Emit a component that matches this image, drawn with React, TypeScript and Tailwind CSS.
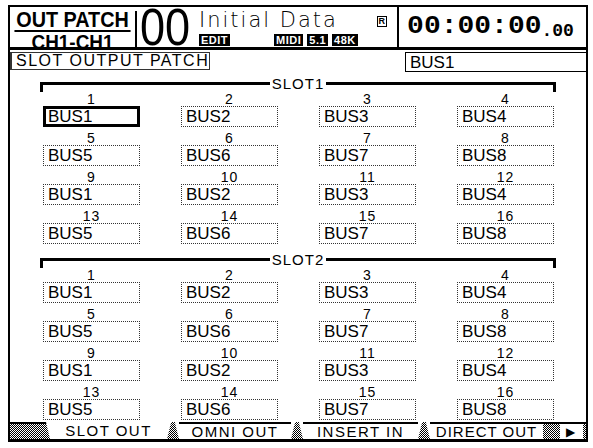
import React from "react";

const checker =
  "bg-[repeating-conic-gradient(#000_0_25%,#fff_0_50%)] bg-[length:2px_2px]";

type Cell = { n: number; label: string };

const buses = ["BUS1", "BUS2", "BUS3", "BUS4", "BUS5", "BUS6", "BUS7", "BUS8"];
const cells: Cell[] = Array.from({ length: 16 }, (_, i) => ({
  n: i + 1,
  label: buses[i % 8],
}));

function SlotHeader({ name }: { name: string }) {
  return (
    <div className="flex items-start h-[10px] w-[516px]">
      <div className="w-[3px] h-[10px] bg-black" />
      <div className="flex-1 h-[3px] bg-black" />
      <div className="-mt-[6px] px-[2px] text-[15px] leading-[15px] tracking-[1px]">{name}</div>
      <div className="flex-1 h-[3px] bg-black" />
      <div className="w-[3px] h-[10px] bg-black" />
    </div>
  );
}

function Slot({ name, selectedFirst }: { name: string; selectedFirst?: boolean }) {
  return (
    <div className="ml-[30px]">
      <SlotHeader name={name} />
      <div className="ml-[3px] grid grid-cols-[97px_97px_97px_97px] gap-x-[41px] gap-y-[4px]">
        {cells.map((c) => {
          const sel = selectedFirst && c.n === 1;
          return (
            <div key={c.n} className="flex flex-col">
              <div className="h-[14px] text-[14px] leading-[14px] text-center tracking-[1px]">{c.n}</div>
              <div
                className={
                  sel
                    ? "h-[21px] border-[3px] border-black pl-[2px] flex items-center text-[17px] leading-none"
                    : "h-[21px] border border-dotted border-[#333] pl-[4px] flex items-center text-[17px] leading-none"
                }
              >
                {c.label}
              </div>
            </div>
          );
        })}
      </div>
    </div>
  );
}

function Badge({ children }: { children: React.ReactNode }) {
  return (
    <span className="bg-black text-white text-[11px] font-bold leading-[12px] px-[2px] tracking-[0.5px] whitespace-nowrap">
      {children}
    </span>
  );
}

function TabDivider() {
  return (
    <div className="relative w-[12px] h-full">
      <div className={`absolute inset-0 ${checker} [clip-path:polygon(35%_0,65%_0,100%_100%,0_100%)]`} />
    </div>
  );
}

export default function App() {
  return (
    <div className="w-[593px] h-[448px] bg-white text-black font-['Liberation_Sans',Arial,sans-serif] overflow-hidden whitespace-nowrap">
      <div className="ml-[8px] pt-[5px] w-[580px]">
        <div className="border-2 border-black border-b-[3px] h-[437px] flex flex-col">
          {/* header */}
          <div className="h-[43px] flex border-b-[3px] border-black">
            <div className="w-[125px] flex flex-col items-center pt-[3px]">
              <div className="text-[22px] font-bold leading-[20px] border-b-2 border-black px-[2px] scale-x-[0.9]">
                OUT PATCH
              </div>
              <div className="text-[21px] font-bold leading-[18px] mt-[1px] scale-x-[0.9]">CH1-CH1</div>
            </div>
            <div className="w-[2px] mt-[4px] bg-black" />
            <div className="w-[62px] flex items-center pl-[3px]">
              <span className="text-[46px] leading-[36px] scale-y-[1.12] scale-x-[0.98] origin-left">00</span>
            </div>
            <div className="w-[198px] flex flex-col pt-[1px]">
              <div className="flex items-start justify-between pr-[10px]">
                <span className="text-[21px] leading-[24px] tracking-[2px] font-['DejaVu_Sans',sans-serif] font-extralight">
                  Initial Data
                </span>
                <span className="mt-[8px] border border-black text-[9px] leading-[9px] px-[1px] font-bold">R</span>
              </div>
              <div className="flex items-center gap-[4px] mt-[2px]">
                <Badge>EDIT</Badge>
                <span className="w-[36px]" />
                <Badge>MIDI</Badge>
                <Badge>5.1</Badge>
                <Badge>48K</Badge>
              </div>
            </div>
            <div className="w-[2px] bg-black" />
            <div className="flex-1 flex items-center justify-center pr-[4px]">
              <span className="text-[28px] font-bold leading-none scale-y-[0.9] font-['Liberation_Mono',monospace]">
                00:00:00
              </span>
              <span className="text-[18px] font-bold leading-none mt-[8px] font-['Liberation_Mono',monospace]">.00</span>
            </div>
          </div>

          {/* title row */}
          <div className="mt-[2px] flex justify-between items-start">
            <div className="w-[200px] h-[18px] border border-[#333] border-l-dotted border-l-2 flex items-center pl-[4px] text-[16px] leading-none tracking-[1.5px]">
              SLOT OUTPUT PATCH
            </div>
            <div className="w-[181px] h-[20px] border border-black border-r-0 flex items-center pl-[4px] text-[17px] leading-none">
              BUS1
            </div>
          </div>

          <div className="mt-[10px]">
            <Slot name="SLOT1" selectedFirst />
          </div>
          <div className="mt-[14px]">
            <Slot name="SLOT2" />
          </div>

          {/* tabs */}
          <div className="mt-auto h-[17px] flex items-stretch text-[15px] leading-none tracking-[1.5px]">
            <div className={`w-[40px] ${checker} border-t-2 border-black [clip-path:polygon(0_0,90%_0,100%_100%,0_100%)]`} />
            <div className="w-[117px] flex items-center justify-center">SLOT OUT</div>
            <TabDivider />
            <div className="w-[112px] border-t-2 border-black flex items-center justify-center">OMNI OUT</div>
            <TabDivider />
            <div className="w-[115px] border-t-2 border-black flex items-center justify-center">INSERT IN</div>
            <TabDivider />
            <div className="w-[113px] border-t-2 border-black flex items-center justify-center tracking-[1px]">DIRECT OUT</div>
            <div className={`w-[17px] ${checker} border-t-2 border-black`} />
            <div className="w-[23px] border-t-2 border-black flex items-center justify-center text-[12px]">▶</div>
            <div className={`flex-1 ${checker} border-t-2 border-black`} />
          </div>
        </div>
      </div>
    </div>
  );
}
